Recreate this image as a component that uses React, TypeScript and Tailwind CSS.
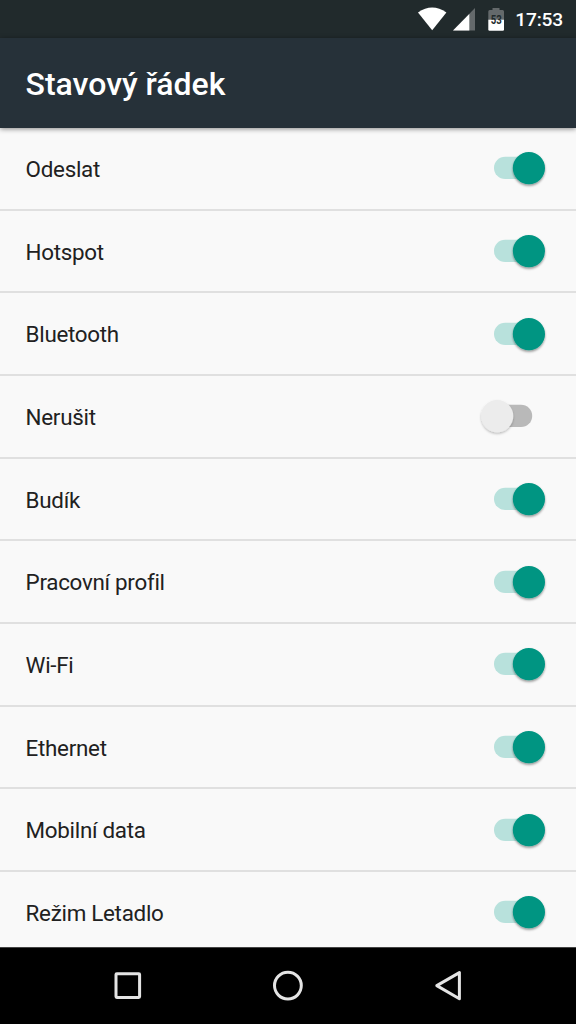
const items = [
  { label: "Odeslat", on: true },
  { label: "Hotspot", on: true },
  { label: "Bluetooth", on: true },
  { label: "Nerušit", on: false },
  { label: "Budík", on: true },
  { label: "Pracovní profil", on: true },
  { label: "Wi-Fi", on: true },
  { label: "Ethernet", on: true },
  { label: "Mobilní data", on: true },
  { label: "Režim Letadlo", on: true },
];

function Toggle({ on }: { on: boolean }) {
  const filterId = on ? "thumb-shadow-on" : "thumb-shadow-off";

  return (
    <svg width="70" height="44" viewBox="478 146 70 44" className="shrink-0">
      <defs>
        <filter id={filterId} x="-30%" y="-30%" width="160%" height="170%">
          <feDropShadow dx="0" dy="1.5" stdDeviation="1.2" floodOpacity={on ? 0.42 : 0.25} />
        </filter>
      </defs>
      <rect x="494" y="156.8" width="38.2" height="22.3" rx="11.15" fill={on ? "#b8e1dc" : "#b9b9b9"} />
      <circle cx={on ? 528.9 : 497.2} cy="168.1" r="16.1" fill={on ? "#009582" : "#ececec"} filter={`url(#${filterId})`} />
    </svg>
  );
}

function StatusBar() {
  return (
    <div className="flex h-[38px] items-center justify-end bg-[#212a2c] pr-[13px]">
      <svg width="98" height="38" viewBox="412 0 98 38">
        <path d="M418 12.4Q432.2 2.6 446.4 12.4L432.2 30.2Z" fill="#fff" />
        <path d="M475 8V30.5H453Z" fill="#64696b" />
        <path d="M469.3 13.9V30.5H453Z" fill="#fff" />
        <path d="M492.5 8H499.5V10H502.6Q504 10 504 11.5V20H488.3V11.5Q488.3 10 489.7 10H492.5Z" fill="#64696b" />
        <path d="M488.3 19.7H504V29.5Q504 30.7 502.8 30.7H489.5Q488.3 30.7 488.3 29.5Z" fill="#fff" />
        <text x="496.3" y="23.8" textAnchor="middle" fontSize="12" fontWeight="700" textLength="11" lengthAdjust="spacingAndGlyphs" fill="#212a2c">
          53
        </text>
      </svg>
      <span className="ml-[5px] pt-[2px] text-[19.2px] leading-none font-medium tracking-[-0.2px] whitespace-nowrap text-white">17:53</span>
    </div>
  );
}

function NavBar() {
  return (
    <div className="flex h-[77px] shrink-0 items-center justify-center gap-[124px] border-t border-[#444] bg-black">
      <svg width="36" height="36" viewBox="0 0 36 36" fill="none" stroke="#e4e4e4" strokeWidth="3">
        <rect x="6" y="5.8" width="23.6" height="23.6" rx="0.8" />
      </svg>
      <svg width="36" height="36" viewBox="0 0 36 36" fill="none" stroke="#e4e4e4" strokeWidth="3">
        <circle cx="17.9" cy="17.6" r="13.4" />
      </svg>
      <svg width="36" height="36" viewBox="0 0 36 36" fill="none" stroke="#e4e4e4" strokeWidth="3" strokeLinejoin="round">
        <path d="M29.4 4.6V30.8L6.8 17.6Z" />
      </svg>
    </div>
  );
}

export default function App() {
  return (
    <div className="flex h-[1024px] w-[576px] flex-col overflow-hidden bg-[#f9f9f9] font-[Roboto,sans-serif]">
      <StatusBar />
      <header className="z-10 flex h-[90px] shrink-0 items-center bg-[#263139] px-[25.6px] pt-[2px] shadow-[0_1px_5px_rgba(0,0,0,0.45)]">
        <h1 className="text-[32px] leading-none font-medium tracking-[-0.01px] text-white">Stavový řádek</h1>
      </header>
      <main className="min-h-0 flex-1 overflow-hidden">
        {items.map((item) => (
          <div key={item.label} className="flex h-[82.67px] items-center justify-between border-b-2 border-[#e0e0e0] pr-7 pl-[25.6px]">
            <span className="pt-[2px] text-[22.4px] leading-none tracking-[-0.29px] text-[#212121]">{item.label}</span>
            <Toggle on={item.on} />
          </div>
        ))}
      </main>
      <NavBar />
    </div>
  );
}
